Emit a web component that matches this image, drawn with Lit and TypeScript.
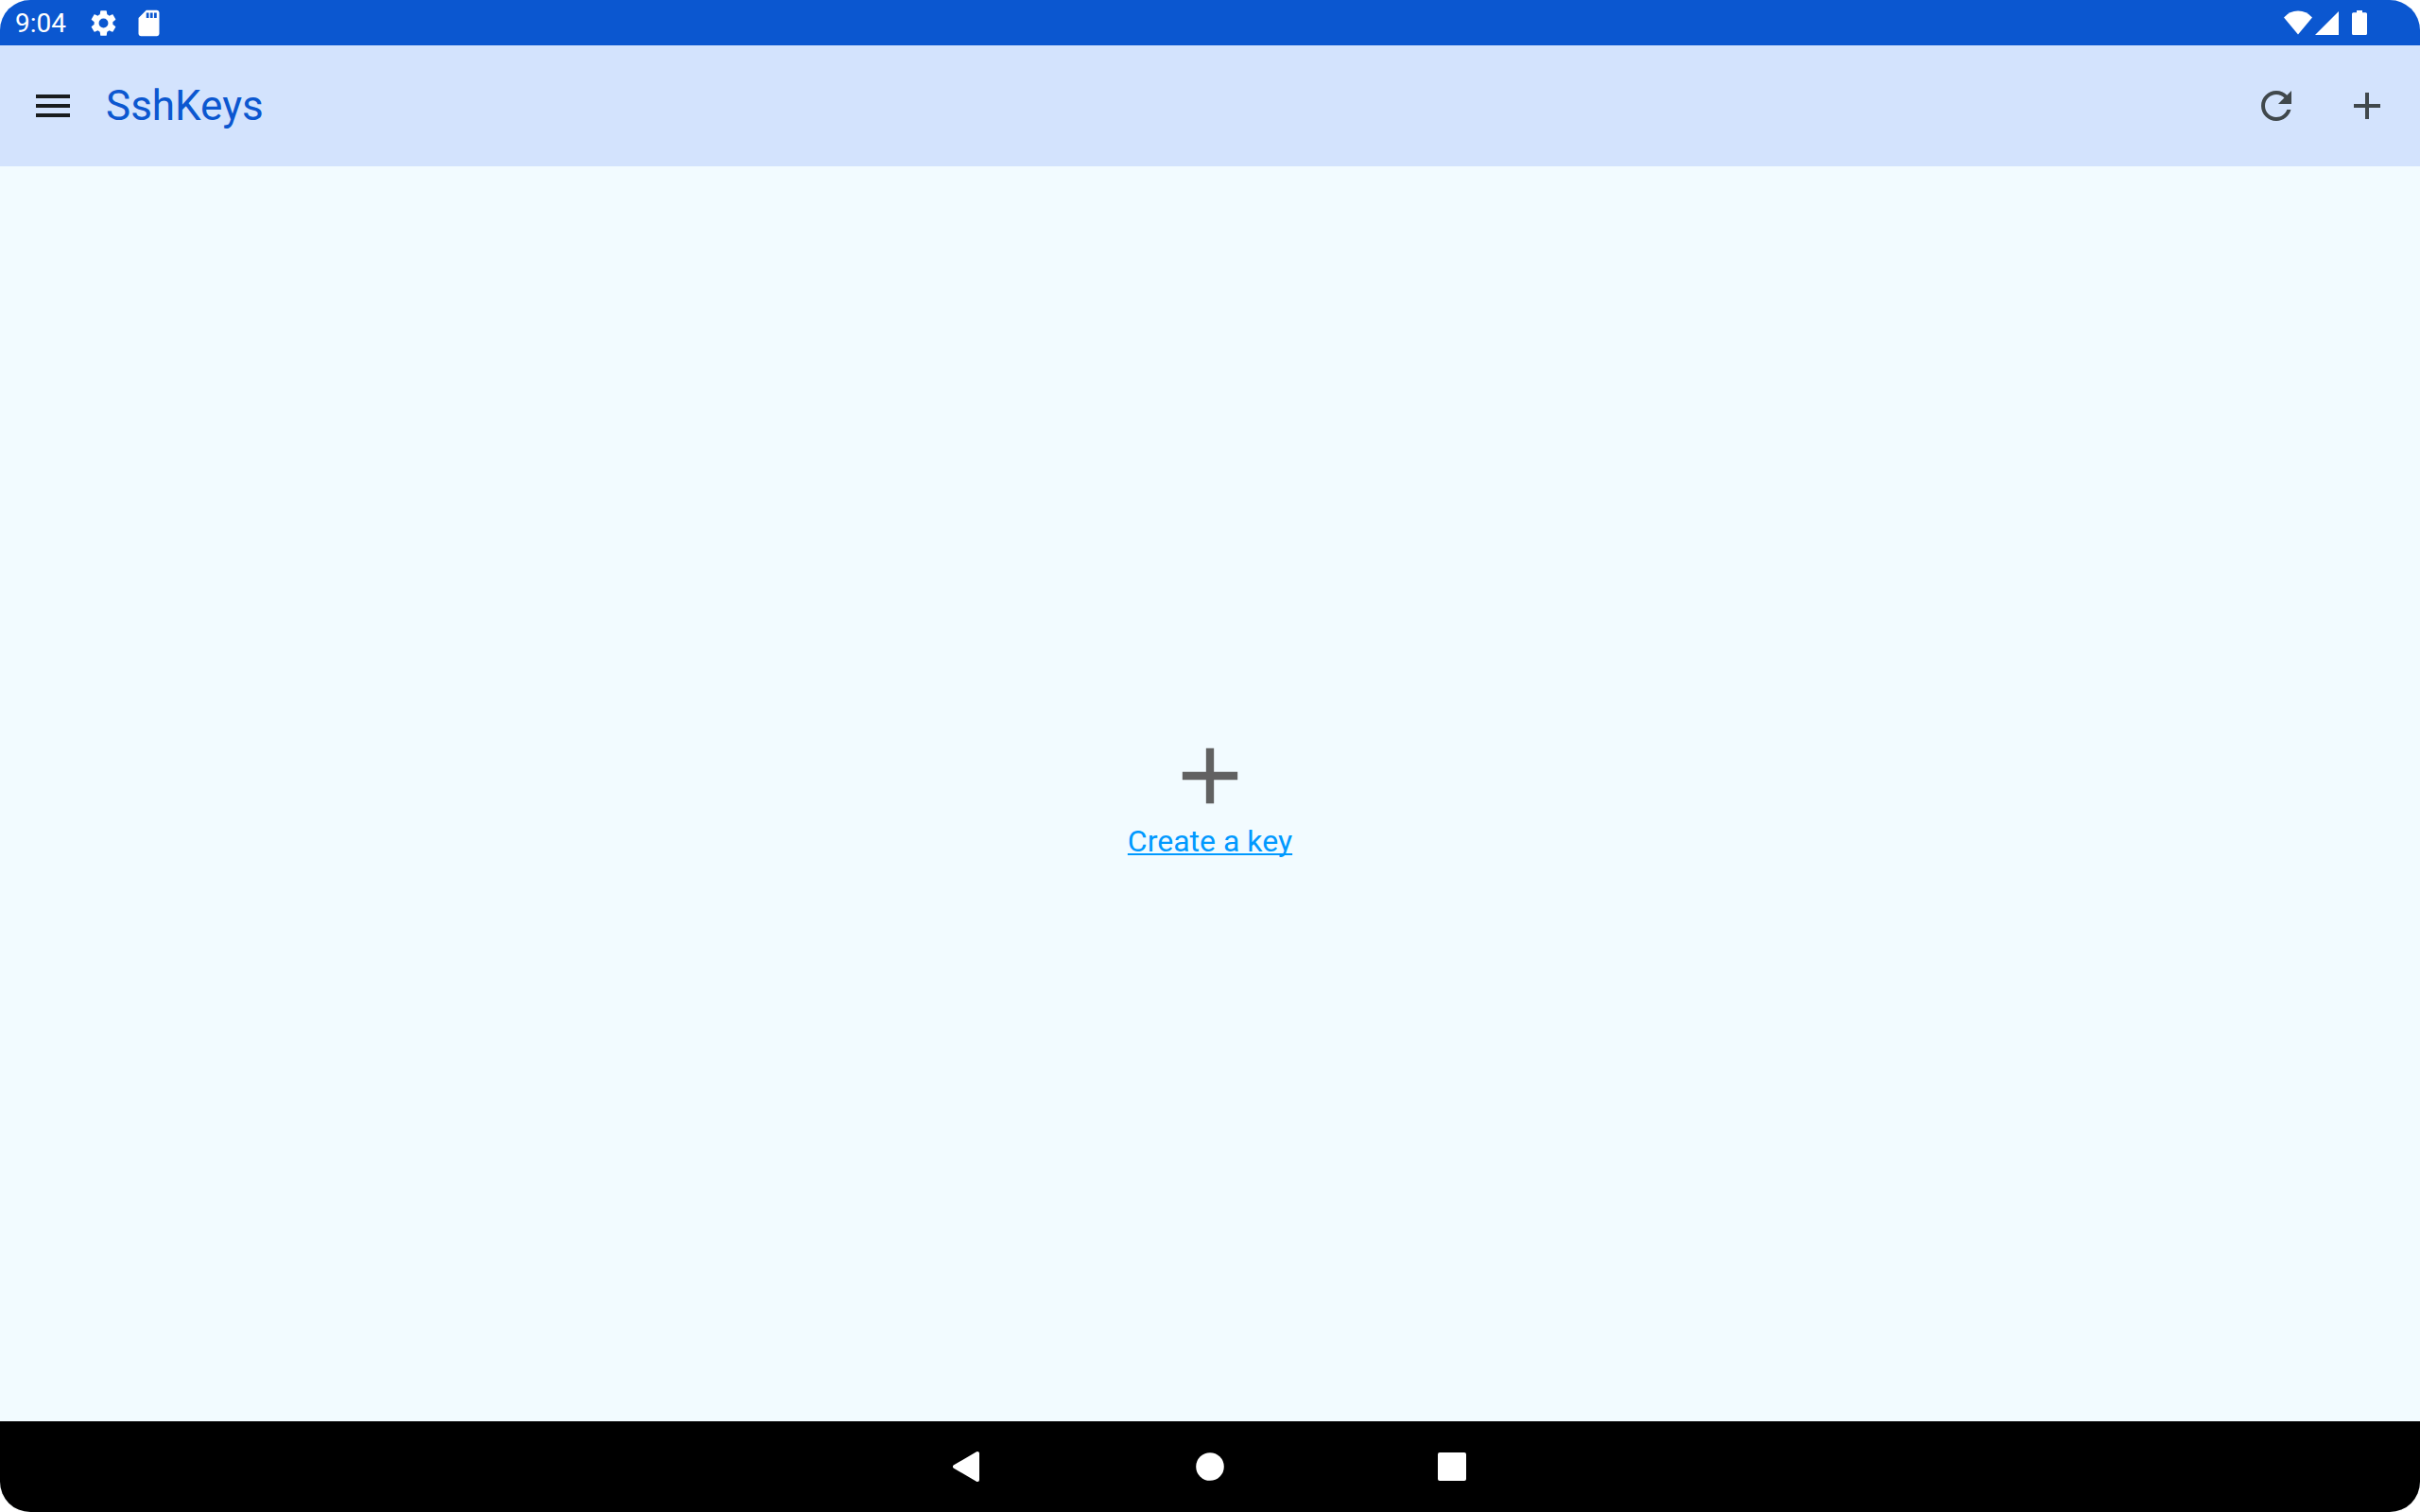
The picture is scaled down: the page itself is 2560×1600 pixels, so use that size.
import { LitElement, html, css, svg } from "lit";
import { customElement } from "lit/decorators.js";

const icon = (cls: string, box: string, body: unknown) =>
  html`<svg class=${cls} viewBox=${box} aria-hidden="true">${body}</svg>`;

const PLUS = svg`<path d="M19 13h-6v6h-2v-6H5v-2h6V5h2v6h6v2z"/>`;

@customElement("status-bar")
export class StatusBar extends LitElement {
  static styles = css`
    :host {
      display: flex;
      justify-content: space-between;
      align-items: center;
      height: 48px;
      padding: 0 56px 0 16px;
      box-sizing: border-box;
      background: #0b57d0;
      color: #fff;
      font-size: 28px;
      line-height: 32px;
    }
    .group {
      display: flex;
      align-items: center;
    }
    .notices {
      gap: 15px;
    }
    .clock {
      padding-top: 2px;
      margin-right: 8px;
    }
    svg {
      display: block;
      fill: currentColor;
    }
    .notice {
      width: 33px;
      height: 33px;
    }
    .signals {
      width: 88px;
      height: 32px;
    }
  `;

  render() {
    return html`
      <div class="group notices">
        <time class="clock">9:04</time>
        ${icon(
          "notice",
          "0 0 24 24",
          svg`<path d="M19.14 12.94c.04-.3.06-.61.06-.94 0-.32-.02-.64-.07-.94l2.03-1.58c.18-.14.23-.41.12-.61l-1.92-3.32c-.12-.22-.37-.29-.59-.22l-2.39.96c-.5-.38-1.03-.7-1.62-.94l-.36-2.54c-.04-.24-.24-.41-.48-.41h-3.84c-.24 0-.43.17-.47.41l-.36 2.54c-.59.24-1.13.57-1.62.94l-2.39-.96c-.22-.08-.47 0-.59.22L2.74 8.87c-.12.21-.08.47.12.61l2.03 1.58c-.05.3-.09.63-.09.94s.02.64.07.94l-2.03 1.58c-.18.14-.23.41-.12.61l1.92 3.32c.12.22.37.29.59.22l2.39-.96c.5.38 1.03.7 1.62.94l.36 2.54c.05.24.24.41.48.41h3.84c.24 0 .44-.17.47-.41l.36-2.54c.59-.24 1.13-.56 1.62-.94l2.39.96c.22.08.47 0 .59-.22l1.92-3.32c.12-.22.07-.47-.12-.61l-2.01-1.58zM12 15.600A3.600 3.600 0 1 1 12 8.400a3.600 3.600 0 0 1 0 7.200z"/>`
        )}
        ${icon(
          "notice",
          "0 0 24 24",
          svg`<path d="M18 2h-8L4.020 8 4 20c0 1.100.9 2 2 2h12c1.100 0 2-.9 2-2V4c0-1.100-.9-2-2-2zm-6 6h-2V4h2v4zm3 0h-2V4h2v4zm3 0h-2V4h2v4z"/>`
        )}
      </div>
      ${icon(
        "signals",
        "0 0 88 32",
        svg`<path d="M0 10.500Q6 3.500 15 3.500T30 10.500L15 28.500z"/>
            <path d="M33 29L58 4v25z"/>
            <path d="M77 3h6v2.300h3.500q1.500 0 1.500 1.500V27.500q0 1.500-1.500 1.500H73.500q-1.500 0-1.500-1.500V6.800q0-1.500 1.500-1.500H77z"/>`
      )}
    `;
  }
}

@customElement("top-bar")
export class TopBar extends LitElement {
  static styles = css`
    :host {
      display: flex;
      align-items: center;
      height: 128px;
      padding: 0 32px;
      box-sizing: border-box;
      background: #d3e3fd;
    }
    h1 {
      flex: 1;
      margin: 0 0 0 32px;
      color: #0b57d0;
      font-size: 44px;
      line-height: 52px;
      font-weight: 400;
    }
    .actions {
      display: flex;
      gap: 48px;
    }
    button {
      padding: 0;
      border: 0;
      background: none;
      color: #40484c;
      cursor: pointer;
    }
    .menu {
      color: #191c1d;
    }
    svg {
      display: block;
      width: 48px;
      height: 48px;
      fill: currentColor;
    }
  `;

  render() {
    return html`
      <button class="menu" aria-label="Menu">
        ${icon("glyph", "0 0 24 24", svg`<path d="M3 18h18v-2H3v2zm0-5h18v-2H3v2zm0-7v2h18V6H3z"/>`)}
      </button>
      <h1>SshKeys</h1>
      <div class="actions">
        <button aria-label="Refresh">
          ${icon(
            "glyph",
            "0 0 24 24",
            svg`<path d="M17.650 6.350C16.200 4.900 14.210 4 12 4c-4.420 0-7.990 3.580-7.990 8s3.570 8 7.990 8c3.730 0 6.840-2.550 7.730-6h-2.080c-.82 2.330-3.040 4-5.650 4-3.310 0-6-2.690-6-6s2.690-6 6-6c1.660 0 3.140.69 4.220 1.780L13 11h7V4l-2.350 2.350z"/>`
          )}
        </button>
        <button aria-label="Add">${icon("glyph", "0 0 24 24", PLUS)}</button>
      </div>
    `;
  }
}

@customElement("nav-bar")
export class NavBar extends LitElement {
  static styles = css`
    :host {
      display: flex;
      justify-content: center;
      align-items: center;
      gap: 192px;
      height: 96px;
      background: #000;
      color: #fff;
    }
    button {
      padding: 0;
      border: 0;
      background: none;
      color: inherit;
      cursor: pointer;
    }
    svg {
      display: block;
      width: 64px;
      height: 64px;
      fill: currentColor;
      stroke: currentColor;
      stroke-linejoin: round;
    }
  `;

  render() {
    return html`
      <button aria-label="Back">
        ${icon("glyph", "0 0 64 64", svg`<path stroke-width="4" d="M18 32L42 18v28z"/>`)}
      </button>
      <button aria-label="Home">
        ${icon("glyph", "0 0 64 64", svg`<circle cx="32" cy="32" r="14.800" stroke="none"/>`)}
      </button>
      <button aria-label="Overview">
        ${icon("glyph", "0 0 64 64", svg`<rect x="17" y="17" width="30" height="30" rx="2" stroke="none"/>`)}
      </button>
    `;
  }
}

@customElement("app-root")
export class AppRoot extends LitElement {
  static styles = css`
    :host {
      display: block;
      background: #fff;
      font-family: Roboto, "Liberation Sans", sans-serif;
    }
    .screen {
      display: flex;
      flex-direction: column;
      min-height: 100vh;
      border-radius: 32px;
      overflow: hidden;
      background: #f2fbff;
    }
    main {
      flex: 1;
      display: flex;
      flex-direction: column;
      align-items: center;
      justify-content: center;
    }
    .plus {
      display: block;
      width: 100px;
      height: 100px;
      fill: #616161;
    }
    .create {
      display: flex;
      flex-direction: column;
      align-items: center;
      color: #0099ff;
      font-size: 32px;
      line-height: 38px;
      text-decoration-thickness: 2px;
      text-decoration-skip-ink: none;
      text-underline-offset: 2px;
    }
  `;

  render() {
    return html`
      <div class="screen">
        <status-bar></status-bar>
        <top-bar></top-bar>
        <main>
          <a class="create" href="#create">
            ${icon("plus", "0 0 24 24", PLUS)}
            <span>Create a key</span>
          </a>
        </main>
        <nav-bar></nav-bar>
      </div>
    `;
  }
}
